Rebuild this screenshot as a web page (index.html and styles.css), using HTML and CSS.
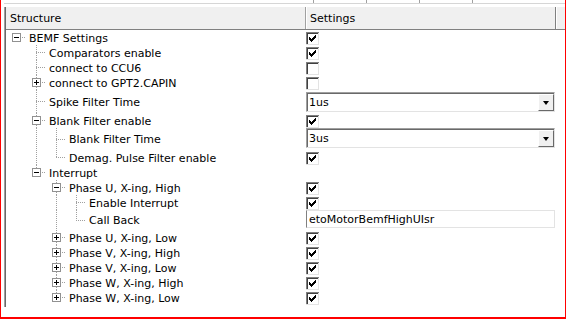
FILE: index.html
```html
<!DOCTYPE html>
<html>
  <head>
    <meta charset="UTF-8" />
    <title>BEMF Settings</title>
    <link rel="stylesheet" href="styles.css">
  </head>
  <body>
    <div class="frame">
      <div class="top-strip">
        <span class="tick"></span><span class="tick"></span><span class="tick"></span><span class="tick"></span>
      </div>
      <div class="panel">
        <div class="header">
          <div class="head-cell head-structure">Structure</div>
          <div class="head-cell head-settings">Settings</div>
          <div class="head-cell head-rest"></div>
        </div>

        <div class="rows">
          <!-- BEMF Settings -->
          <div class="row">
            <div class="tree"><span class="c root"><svg class="exp" width="9" height="9"><use href="#minus"/></svg></span><span class="label">BEMF Settings</span></div>
            <div class="value"><svg class="check" width="13" height="13"><use href="#cb-on"/></svg></div>
          </div>
          <div class="row">
            <div class="tree"><span class="g"></span><span class="c mid"></span><span class="label">Comparators enable</span></div>
            <div class="value"><svg class="check" width="13" height="13"><use href="#cb-on"/></svg></div>
          </div>
          <div class="row">
            <div class="tree"><span class="g"></span><span class="c mid"></span><span class="label">connect to CCU6</span></div>
            <div class="value"><svg class="check" width="13" height="13"><use href="#cb-off"/></svg></div>
          </div>
          <div class="row">
            <div class="tree"><span class="g"></span><span class="c mid"><svg class="exp" width="9" height="9"><use href="#plus"/></svg></span><span class="label">connect to GPT2.CAPIN</span></div>
            <div class="value"><svg class="check" width="13" height="13"><use href="#cb-off"/></svg></div>
          </div>
          <div class="row row-select">
            <div class="tree"><span class="g"></span><span class="c mid"></span><span class="label">Spike Filter Time</span></div>
            <div class="value">
              <div class="combo"><span class="combo-text">1us</span><span class="combo-btn"></span></div>
            </div>
          </div>
          <div class="row">
            <div class="tree"><span class="g"></span><span class="c mid"><svg class="exp" width="9" height="9"><use href="#minus"/></svg></span><span class="label">Blank Filter enable</span></div>
            <div class="value"><svg class="check" width="13" height="13"><use href="#cb-on"/></svg></div>
          </div>
          <div class="row row-select tight">
            <div class="tree"><span class="g"></span><span class="g line"></span><span class="c mid"></span><span class="label">Blank Filter Time</span></div>
            <div class="value">
              <div class="combo"><span class="combo-text">3us</span><span class="combo-btn"></span></div>
            </div>
          </div>
          <div class="row">
            <div class="tree"><span class="g"></span><span class="g line"></span><span class="c last"></span><span class="label">Demag. Pulse Filter enable</span></div>
            <div class="value"><svg class="check" width="13" height="13"><use href="#cb-on"/></svg></div>
          </div>

          <!-- Interrupt -->
          <div class="row">
            <div class="tree"><span class="g"></span><span class="c last"><svg class="exp" width="9" height="9"><use href="#minus"/></svg></span><span class="label">Interrupt</span></div>
            <div class="value"></div>
          </div>
          <div class="row">
            <div class="tree"><span class="g"></span><span class="g"></span><span class="c mid"><svg class="exp" width="9" height="9"><use href="#minus"/></svg></span><span class="label">Phase U, X-ing, High</span></div>
            <div class="value"><svg class="check" width="13" height="13"><use href="#cb-on"/></svg></div>
          </div>
          <div class="row">
            <div class="tree"><span class="g"></span><span class="g"></span><span class="g line"></span><span class="c mid"></span><span class="label">Enable Interrupt</span></div>
            <div class="value"><svg class="check" width="13" height="13"><use href="#cb-on"/></svg></div>
          </div>
          <div class="row row-text">
            <div class="tree"><span class="g"></span><span class="g"></span><span class="g line"></span><span class="c last"></span><span class="label">Call Back</span></div>
            <div class="value"><div class="textbox">etoMotorBemfHighUIsr</div></div>
          </div>
          <div class="row">
            <div class="tree"><span class="g"></span><span class="g"></span><span class="c mid"><svg class="exp" width="9" height="9"><use href="#plus"/></svg></span><span class="label">Phase U, X-ing, Low</span></div>
            <div class="value"><svg class="check" width="13" height="13"><use href="#cb-on"/></svg></div>
          </div>
          <div class="row">
            <div class="tree"><span class="g"></span><span class="g"></span><span class="c mid"><svg class="exp" width="9" height="9"><use href="#plus"/></svg></span><span class="label">Phase V, X-ing, High</span></div>
            <div class="value"><svg class="check" width="13" height="13"><use href="#cb-on"/></svg></div>
          </div>
          <div class="row">
            <div class="tree"><span class="g"></span><span class="g"></span><span class="c mid"><svg class="exp" width="9" height="9"><use href="#plus"/></svg></span><span class="label">Phase V, X-ing, Low</span></div>
            <div class="value"><svg class="check" width="13" height="13"><use href="#cb-on"/></svg></div>
          </div>
          <div class="row">
            <div class="tree"><span class="g"></span><span class="g"></span><span class="c mid"><svg class="exp" width="9" height="9"><use href="#plus"/></svg></span><span class="label">Phase W, X-ing, High</span></div>
            <div class="value"><svg class="check" width="13" height="13"><use href="#cb-on"/></svg></div>
          </div>
          <div class="row">
            <div class="tree"><span class="g"></span><span class="g"></span><span class="c last"><svg class="exp" width="9" height="9"><use href="#plus"/></svg></span><span class="label">Phase W, X-ing, Low</span></div>
            <div class="value"><svg class="check" width="13" height="13"><use href="#cb-on"/></svg></div>
          </div>
        </div>
      </div>
    </div>

    <!-- shared glyphs -->
    <svg class="defs" width="0" height="0">
      <defs>
        <g id="cb-off">
          <rect x="0" y="0" width="13" height="13" fill="#fff"/>
          <path d="M0 0h13v1H1v12H0z" fill="#808080"/>
          <path d="M1 1h11v1H2v10H1z" fill="#404040"/>
          <path d="M12 1h1v12H0v-1h12z" fill="#e3e3e3"/>
        </g>
        <g id="cb-on">
          <use href="#cb-off"/>
          <path d="M3 5h1v3H3zM4 6h1v3H4zM5 7h1v3H5zM6 6h1v3H6zM7 5h1v3H7zM8 4h1v3H8zM9 3h1v3H9z" fill="#000"/>
        </g>
        <g id="minus">
          <rect x="0.5" y="0.5" width="8" height="8" fill="#fff" stroke="#919191"/>
          <path d="M2 4h5v1H2z" fill="#000"/>
        </g>
        <g id="plus">
          <rect x="0.5" y="0.5" width="8" height="8" fill="#fff" stroke="#919191"/>
          <path d="M2 4h5v1H2zM4 2h1v5H4z" fill="#000"/>
        </g>
      </defs>
    </svg>
  </body>
</html>
```

FILE: styles.css
```css
html, body {
  margin: 0;
  background: #fff;
}
body {
  font-family: "DejaVu Sans", sans-serif;
  font-size: 11px;
  color: #000;
}
.defs {
  position: absolute;
  width: 0;
  height: 0;
}
.frame {
  width: 566px;
  height: 319px;
  box-sizing: border-box;
  border-left: 1px solid #ff0000;
  border-right: 1px solid #ff0000;
  border-bottom: 2px solid #ff0000;
  padding-left: 3px;
  overflow: hidden;
}

/* strip of the grid above, scrolled almost out of view */
.top-strip {
  display: flex;
  height: 3px;
  border-bottom: 1px solid #d6d6d6;
  margin-bottom: 3px;
  padding-left: 309px;
  gap: 52px;
}
.tick {
  width: 1px;
  background: #a0a0a0;
}

.panel {
  border-left: 1px solid #a0a0a0;
  box-shadow: inset 1px 0 #696969;
  padding-left: 1px;
  height: 300px;
}
.header {
  display: flex;
  height: 22px;
  background: #f0f0f0;
  border-bottom: 1px solid #808080;
}
.head-cell {
  display: flex;
  align-items: center;
  box-sizing: border-box;
  padding-top: 1px;
}
.head-structure {
  width: 300px;
  padding-left: 4px;
  border-right: 1px solid #a0a0a0;
}
.head-settings {
  width: 250px;
  padding-left: 3px;
  border-left: 1px solid #fff;
  border-right: 1px solid #808080;
}
.head-rest {
  flex: 1;
  border-left: 1px solid #fff;
}

.row {
  display: flex;
  height: 15px;
}
.row-select {
  height: 23px;
}
.row-select.tight {
  height: 22px;
}
.row-text {
  height: 20px;
}
.tree {
  width: 300px;
  display: flex;
  flex-shrink: 0;
}
.value {
  display: flex;
  align-items: flex-start;
  width: 249px;
}
.row .value .check {
  margin-top: 2px;
}
.row-select .value {
  padding-top: 2px;
}
.row-select.tight .value {
  padding-top: 0;
}

/* tree lines */
.g, .c {
  width: 20px;
  flex-shrink: 0;
  background-repeat: no-repeat;
}
.g.line {
  background-image: repeating-linear-gradient(to bottom, #a0a0a0 0 1px, transparent 1px 2px);
  background-size: 1px 100%;
  background-position: 10px 0;
}
.c {
  display: flex;
  align-items: center;
  background-image: repeating-linear-gradient(to right, #a0a0a0 0 1px, transparent 1px 2px);
  background-size: 11px 1px;
  background-position: 10px 50%;
}
.c.mid {
  background-image: repeating-linear-gradient(to right, #a0a0a0 0 1px, transparent 1px 2px),
    repeating-linear-gradient(to bottom, #a0a0a0 0 1px, transparent 1px 2px);
  background-size: 11px 1px, 1px 100%;
  background-position: 10px 50%, 10px 0;
}
.c.last {
  background-image: repeating-linear-gradient(to right, #a0a0a0 0 1px, transparent 1px 2px),
    repeating-linear-gradient(to bottom, #a0a0a0 0 1px, transparent 1px 2px);
  background-size: 11px 1px, 1px 50%;
  background-position: 10px 50%, 10px 0;
}
.exp {
  margin-left: 6px;
}
.label {
  display: flex;
  align-items: center;
  padding: 1px 0 0 3px;
  white-space: nowrap;
}

/* editors */
.combo {
  display: flex;
  width: 249px;
  height: 20px;
  box-sizing: border-box;
  border-top: 1px solid #a0a0a0;
  border-left: 1px solid #a0a0a0;
  border-right: 1px solid #e3e3e3;
  border-bottom: 1px solid #e3e3e3;
  box-shadow: inset 1px 1px #696969;
  background: #fff;
}
.combo-text {
  flex: 1;
  display: flex;
  align-items: center;
  padding-left: 2px;
}
.combo-btn {
  width: 16px;
  margin-top: 1px;
  box-sizing: border-box;
  background: #f0f0f0;
  border-top: 1px solid #fff;
  border-left: 1px solid #fff;
  border-right: 1px solid #696969;
  border-bottom: 1px solid #696969;
  display: flex;
  align-items: center;
  justify-content: center;
}
.combo-btn::after {
  content: "";
  border-left: 3.5px solid transparent;
  border-right: 3.5px solid transparent;
  border-top: 4px solid #000;
}
.textbox {
  width: 249px;
  height: 18px;
  box-sizing: border-box;
  border: 1px solid #e3e3e3;
  border-left-color: #808080;
  padding-left: 2px;
  display: flex;
  align-items: center;
}
```
